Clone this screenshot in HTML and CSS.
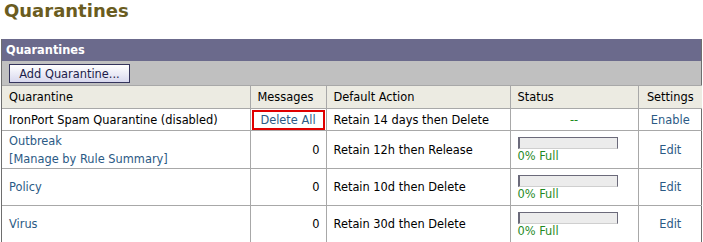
FILE: index.html
```html
<!DOCTYPE html>
<html lang="en">
<head>
    <meta charset="UTF-8">
    <title>Quarantines</title>
    <link rel="stylesheet" href="styles.css">
</head>
<body>
    <h1 class="page-title">Quarantines</h1>
    <div class="panel">
        <div class="panel-head">Quarantines</div>
        <div class="panel-tools">
            <button class="btn" type="button">Add Quarantine...</button>
        </div>
        <table class="qtable">
            <colgroup>
                <col class="c-name">
                <col class="c-msg">
                <col class="c-action">
                <col class="c-status">
                <col class="c-settings">
            </colgroup>
            <thead>
                <tr>
                    <th>Quarantine</th>
                    <th>Messages</th>
                    <th>Default Action</th>
                    <th>Status</th>
                    <th class="center">Settings</th>
                </tr>
            </thead>
            <tbody>
                <tr class="row-spam">
                    <td>IronPort Spam Quarantine (disabled)</td>
                    <td class="center"><a class="delete-all" href="#">Delete All</a></td>
                    <td>Retain 14 days then Delete</td>
                    <td class="center green">--</td>
                    <td class="center"><a href="#">Enable</a></td>
                </tr>
                <tr class="row-tall">
                    <td><a href="#">Outbreak</a><br><a href="#">[Manage by Rule Summary]</a></td>
                    <td class="num">0</td>
                    <td>Retain 12h then Release</td>
                    <td><div class="meter"></div><div class="green">0% Full</div></td>
                    <td class="center"><a href="#">Edit</a></td>
                </tr>
                <tr class="row-mid">
                    <td><a href="#">Policy</a></td>
                    <td class="num">0</td>
                    <td>Retain 10d then Delete</td>
                    <td><div class="meter"></div><div class="green">0% Full</div></td>
                    <td class="center"><a href="#">Edit</a></td>
                </tr>
                <tr class="row-mid">
                    <td><a href="#">Virus</a></td>
                    <td class="num">0</td>
                    <td>Retain 30d then Delete</td>
                    <td><div class="meter"></div><div class="green">0% Full</div></td>
                    <td class="center"><a href="#">Edit</a></td>
                </tr>
            </tbody>
        </table>
    </div>
</body>
</html>
```

FILE: styles.css
```css
body {
    margin: 0;
    padding: 0 1px 0 1px;
    font-family: "DejaVu Sans", Verdana, sans-serif;
    font-size: 11.4px;
    color: #000;
    background-color: #fff;
}
.page-title {
    margin: 0 0 0 3px;
    height: 39px;
    font-size: 18px;
    line-height: 22px;
    font-weight: bold;
    color: #6a5c20;
}
.panel {
    border: 1px solid #6e6e6e;
    border-top: none;
    width: 699px;
}
.panel-head {
    height: 22px;
    line-height: 22px;
    padding-left: 4px;
    background-color: #6b6a8c;
    color: #fff;
    font-weight: bold;
}
.panel-tools {
    height: 24px;
    background-color: #c0c0c0;
    padding: 3px 0 0 7px;
    box-sizing: border-box;
}
.btn {
    width: 121px;
    height: 19px;
    padding: 0;
    font-family: inherit;
    font-size: 11.4px;
    color: #1d1d4a;
    border: 1px solid #34345c;
    background: linear-gradient(#ffffff, #d8d8ee);
}
.qtable {
    width: 100%;
    border-collapse: collapse;
    table-layout: fixed;
}
.c-name { width: 248px; }
.c-msg { width: 76px; }
.c-action { width: 184px; }
.c-status { width: 128px; }
.c-settings { width: 64px; }
.qtable th,
.qtable td {
    border: 1px solid #a8a8a8;
    padding: 0 7px;
    text-align: left;
    white-space: nowrap;
}
.qtable tr > :first-child { border-left: none; }
.qtable tr > :last-child { border-right: none; }
.qtable tbody tr:last-child td { border-bottom: none; }
.qtable th {
    height: 22px;
    font-weight: normal;
    color: #000;
    background-color: #ecebe2;
}
.row-spam td { height: 21px; }
.row-tall td { height: 37px; line-height: 18px; }
.row-mid td { height: 36px; }
.qtable .center { text-align: center; }
.qtable .num { text-align: right; padding-right: 6px; }
a {
    color: #2b5a85;
    text-decoration: none;
}
.green { color: #1f8a1f; }
.delete-all {
    display: block;
    margin: 0 -6px;
    border: 2px solid #e00000;
    line-height: 16px;
}
.meter {
    width: 100px;
    height: 12px;
    box-sizing: border-box;
    margin-top: 2px;
    background-color: #ececec;
    border: 1px solid #6b6a7a;
    border-left-width: 2px;
    border-bottom-color: #cfcfcf;
}
.qtable td .green { line-height: 15px; }
```
